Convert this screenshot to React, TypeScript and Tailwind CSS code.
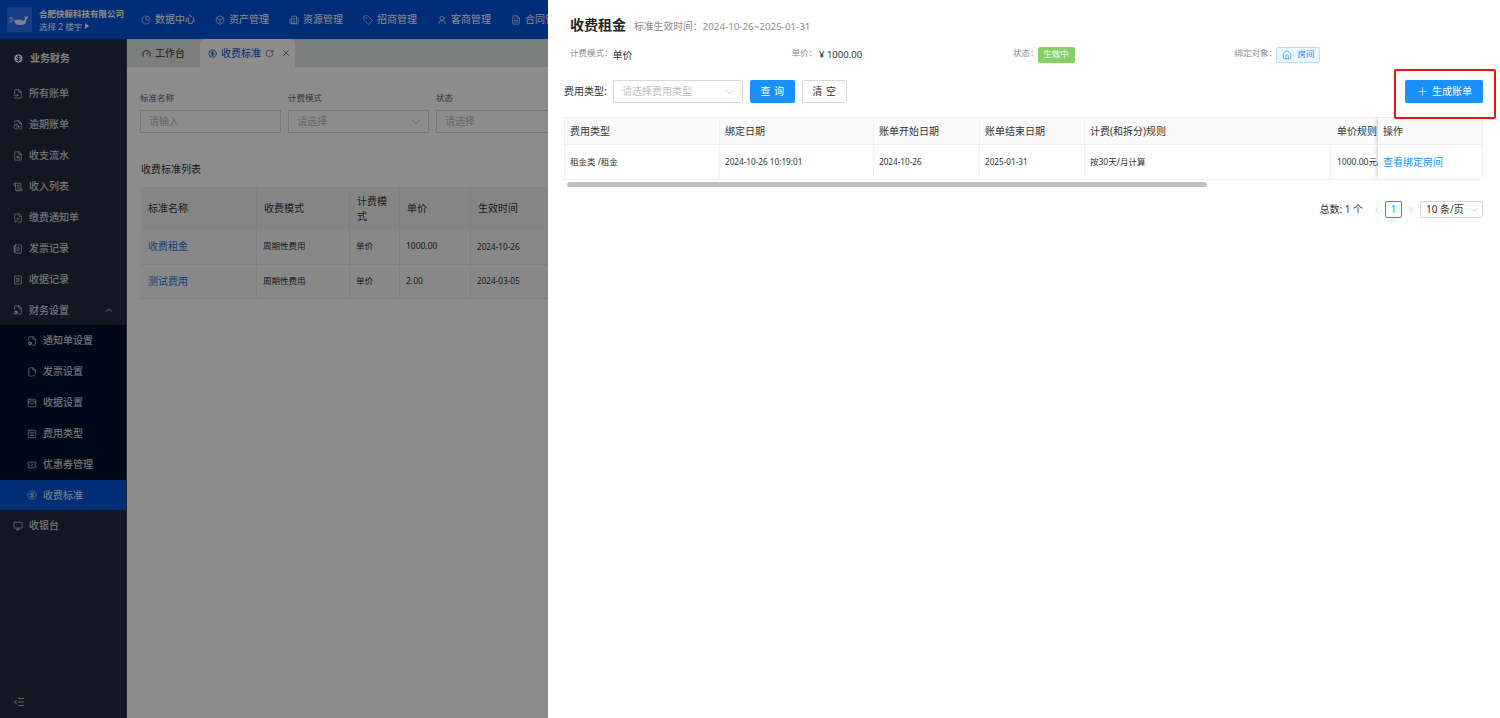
import React from 'react';
import {
  Box, Building2, ChartPie, ChevronDown, ChevronLeft, ChevronRight, ChevronUp, CircleDollarSign, FileClock, FileCog,
  FileSearch, FileText, Gauge, House, IndentDecrease, Monitor, NotebookText, Plus, ReceiptText, RotateCw, ScrollText,
  Tag, TicketPercent, UserRound, WalletCards, X, FileCheck2, FileInput, FilePen, SquareMenu,
} from 'lucide-react';

const FONT = 'font-["Noto_Sans","Noto_Sans_CJK_SC",sans-serif]';

const topNav = [
  { label: '数据中心', icon: ChartPie },
  { label: '资产管理', icon: Box },
  { label: '资源管理', icon: Building2 },
  { label: '招商管理', icon: Tag },
  { label: '客商管理', icon: UserRound },
  { label: '合同管理', icon: FileText },
];

const menu = [
  { label: '所有账单', icon: FileInput },
  { label: '逾期账单', icon: FileClock },
  { label: '收支流水', icon: FileSearch },
  { label: '收入列表', icon: ScrollText },
  { label: '缴费通知单', icon: FilePen },
  { label: '发票记录', icon: NotebookText },
  { label: '收据记录', icon: ReceiptText },
];

const subMenu = [
  { label: '通知单设置', icon: FileCog },
  { label: '发票设置', icon: FileCheck2 },
  { label: '收据设置', icon: WalletCards },
  { label: '费用类型', icon: SquareMenu },
  { label: '优惠券管理', icon: TicketPercent },
];

const listRows = [
  ['收费租金', '周期性费用', '单价', '1000.00', '2024-10-26'],
  ['测试费用', '周期性费用', '单价', '2.00', '2024-03-05'],
];

const Sidebar = () => (
  <aside className="flex w-[127px] shrink-0 flex-col border-r border-[#3a4256] bg-[#242b3f] text-white/90">
    <div className="flex h-[39px] items-center gap-[6px] pl-[13px] text-[10px] font-bold">
      <CircleDollarSign size={11} fill="#fff" stroke="#242b3f" />
      业务财务
    </div>
    {menu.map((m) => (
      <div key={m.label} className="flex h-[31px] items-center gap-[6px] pl-[13px] text-[10px]">
        <m.icon size={10} strokeWidth={1.5} />
        {m.label}
      </div>
    ))}
    <div className="flex h-[30px] items-center gap-[6px] pl-[13px] pr-[12px] text-[10px]">
      <FileCog size={10} strokeWidth={1.5} />
      财务设置
      <ChevronUp size={10} className="ml-auto" />
    </div>
    <div className="bg-[#00122b]">
      {subMenu.map((m) => (
        <div key={m.label} className="flex h-[31px] items-center gap-[6px] pl-[27px] text-[10px]">
          <m.icon size={10} strokeWidth={1.5} />
          {m.label}
        </div>
      ))}
      <div className="flex h-[30px] items-center gap-[6px] bg-[#0054d8] pl-[27px] text-[10px]">
        <CircleDollarSign size={10} strokeWidth={1.5} />
        收费标准
      </div>
    </div>
    <div className="flex h-[31px] items-center gap-[6px] pl-[13px] text-[10px]">
      <Monitor size={10} strokeWidth={1.5} />
      收银台
    </div>
    <div className="mt-auto pb-[10px] pl-[13px]">
      <IndentDecrease size={12} strokeWidth={1.5} />
    </div>
  </aside>
);

const Header = () => (
  <header className="flex h-[39px] shrink-0 items-center bg-[#0052d9] text-white">
    <div className="flex w-[141px] shrink-0 items-center pl-[7px]">
      <div className="flex h-[25px] w-[25px] items-center justify-center rounded-[2px] bg-[#2f72f8]">
        <svg width="21" height="14" viewBox="0 0 21 14">
          <path d="M5 8c3-2 7-1 10 0 1-2 1-4 0-5l2 1 2-1c0 2-1 3-2 4 1 3-2 5-6 5-3 0-5-1-6-4z" fill="#e8f0ff" />
          <path d="M0 5h4M1 7h4M0 9h3" stroke="#e8f0ff" strokeWidth="0.8" />
        </svg>
      </div>
      <div className="ml-[7px] w-[86px] shrink-0 whitespace-nowrap text-[8.5px] leading-[13px]">
        <div className="font-bold">合肥快鲸科技有限公司</div>
        <div className="flex items-center gap-[3px]">
          选择 2 楼宇
          <span className="h-0 w-0 border-y-[3px] border-l-[4px] border-y-transparent border-l-white" />
        </div>
      </div>
    </div>
    <nav className="flex">
      {topNav.map((n) => (
        <div key={n.label} className="flex w-[74px] shrink-0 items-center gap-[4px] whitespace-nowrap text-[10px]">
          <n.icon size={10} strokeWidth={1.5} />
          {n.label}
        </div>
      ))}
    </nav>
  </header>
);

const Background = () => (
  <main className="flex min-w-0 flex-1 flex-col overflow-hidden">
    <div className="flex h-[28px] shrink-0 items-end bg-[#e2e5e3] pl-[15px]">
      <div className="flex h-[28px] w-[58px] items-center gap-[4px] text-[10px] text-[#333]">
        <Gauge size={9} strokeWidth={2.5} />
        工作台
      </div>
      <div className="flex h-[28px] w-[95px] items-center gap-[4px] rounded-t-[5px] bg-white pl-[8px] text-[10px] text-[#0052d9]">
        <CircleDollarSign size={9} />
        收费标准
        <RotateCw size={9} className="text-[#666]" />
        <X size={10} className="ml-[3px] text-[#666]" />
      </div>
    </div>
    <div className="flex-1 bg-white pl-[13px] pt-[25px]">
      <div className="flex gap-[7px] text-[8.5px] text-[#666]">
        {['标准名称', '计费模式', '状态'].map((label, i) => (
          <div key={label} className="w-[141px]">
            <div className="mb-[7px] h-[11px] leading-[11px]">{label}</div>
            <div className="flex h-[23px] items-center justify-between border border-[#d9d9d9] pl-[8px] pr-[5px] text-[10px] text-[#bbb]">
              {i === 0 ? '请输入' : '请选择'}
              {i === 1 && <ChevronDown size={14} strokeWidth={1.25} />}
            </div>
          </div>
        ))}
      </div>
      <div className="ml-[1px] mt-[29px] text-[10px] leading-[14px] text-[#333]">收费标准列表</div>
      <div className="ml-[1px] mt-[11px] w-[600px] text-[#333]">
        <div className="grid h-[43px] grid-cols-[116px_93px_50px_71px_270px] items-center bg-[#f2f2f2] text-[10px] leading-[15px]">
          {['标准名称', '收费模式', '计费模式', '单价', '生效时间'].map((h) => (
            <div key={h} className="flex h-full items-center border-r border-[#e8e8e8] px-[7px]">
              {h}
            </div>
          ))}
        </div>
        {listRows.map((r) => (
          <div key={r[0]} className="grid h-[34.5px] grid-cols-[116px_93px_50px_71px_270px] items-center border-b border-[#e8e8e8] bg-[#f7f7f7] text-[8.5px]">
            {r.map((c, i) => (
              <div key={i} className={`flex h-full items-center border-r border-[#e8e8e8] pl-[6px] pr-[7px] ${i === 0 ? 'pl-[7px] text-[10px] text-[#1e7be0]' : ''} ${i === 4 ? 'text-[8.2px]' : ''}`}>
                {c}
              </div>
            ))}
          </div>
        ))}
      </div>
    </div>
  </main>
);

const MetaLabel = ({ children }: { children: React.ReactNode }) => (
  <span className="mb-[2px] text-[8.5px] text-[#8c8c9c]">{children}</span>
);

const Drawer = () => (
  <section className="absolute inset-y-0 left-[548px] right-0 bg-white text-[#333]">
    <div className="flex items-baseline pl-[22px] pt-[15px]">
      <h1 className="text-[14px] font-bold leading-[20px] text-[#222]">收费租金</h1>
      <span className="ml-[8px] text-[9.8px] text-[#8c8c8c]">标准生效时间：2024-10-26~2025-01-31</span>
    </div>
    <div className="ml-[22px] mt-[11px] grid h-[17px] w-[886px] grid-cols-4 items-center">
      <div className="flex items-center">
        <MetaLabel>计费模式：</MetaLabel>
        <span className="mt-[1px] text-[10px]">单价</span>
      </div>
      <div className="flex items-center gap-[2px]">
        <MetaLabel>单价：</MetaLabel>
        <span className="mt-[1px] text-[9.5px]">¥ 1000.00</span>
      </div>
      <div className="flex items-center">
        <MetaLabel>状态：</MetaLabel>
        <span className="-ml-[1px] flex h-[16px] w-[37px] items-center justify-center rounded-[2px] bg-[#87d068] text-[8.5px] text-white">生效中</span>
      </div>
      <div className="flex items-center">
        <MetaLabel>绑定对象：</MetaLabel>
        <span className="-ml-[1px] flex h-[16px] w-[44px] items-center justify-center gap-[6px] rounded-[2px] border border-[#b7e0fb] bg-[#e8f6ff] text-[8.5px] text-[#1890ff]">
          <House size={10} strokeWidth={1.5} />
          房间
        </span>
      </div>
    </div>
    <div className="ml-[16px] mr-[17px] mt-[17px] flex h-[23px] items-center">
      <span className="w-[49px] whitespace-nowrap text-[10px]">费用类型:</span>
      <div className="flex h-[23px] w-[130px] items-center justify-between rounded-[2px] border border-[#d9d9d9] pl-[8px] pr-[5px] text-[10px] text-[#bfbfbf]">
        请选择费用类型
        <ChevronDown size={14} strokeWidth={1.25} />
      </div>
      <button className="ml-[7px] h-[23px] w-[45px] rounded-[2px] bg-[#1890ff] text-[10px] tracking-[0.5px] text-white">查 询</button>
      <button className="ml-[7px] h-[23px] w-[45px] rounded-[2px] border border-[#d9d9d9] bg-white text-[10px] tracking-[0.5px]">清 空</button>
      <button className="ml-auto flex h-[23px] w-[78px] items-center justify-center gap-[3px] rounded-[2px] bg-[#1890ff] text-[10px] text-white">
        <Plus size={13} strokeWidth={1.25} />
        生成账单
      </button>
    </div>
    <div className="ml-[16px] mr-[17px] mt-[14px]">
      <div className="grid h-[28px] grid-cols-[155px_154px_106px_105px_246px_47px_104px] border border-b-0 border-[#f0f0f0] bg-[#fafafa] text-[10px]">
        {['费用类型', '绑定日期', '账单开始日期', '账单结束日期', '计费(和拆分)规则', '单价规则', '操作'].map((h, i) => (
          <div key={h} className={`flex items-center overflow-hidden whitespace-nowrap border-b border-[#f0f0f0] pl-[5px] ${i < 4 ? 'border-r' : ''} ${i === 5 ? 'pl-[6px]' : ''} ${i === 6 ? 'bg-[#fafafa] shadow-[-3px_0_3px_-1px_rgba(0,0,0,0.15)]' : ''}`}>
            {h}
          </div>
        ))}
      </div>
      <div className="grid h-[35px] grid-cols-[155px_154px_106px_105px_246px_47px_104px] border border-t-0 border-[#f0f0f0] text-[8.5px]">
        {['租金类 /租金', '2024-10-26 10:19:01', '2024-10-26', '2025-01-31', '按30天/月计算', '1000.00元/月', '查看绑定房间'].map((c, i) => (
          <div key={c} className={`flex items-center overflow-hidden whitespace-nowrap pl-[5px] ${i < 5 ? 'border-r border-[#f0f0f0]' : ''} ${i >= 1 && i <= 3 ? 'text-[8.2px]' : ''} ${i === 5 ? 'pl-[6px]' : ''} ${i === 6 ? 'bg-white text-[10px] text-[#1890ff] shadow-[-3px_0_3px_-1px_rgba(0,0,0,0.15)]' : ''}`}>
            {c}
          </div>
        ))}
      </div>
      <div className="ml-[3px] mt-[2px] h-[5px] w-[640px] rounded-full bg-[#c1c1c1]" />
    </div>
    <div className="mr-[17px] mt-[14px] flex h-[17px] items-center justify-end text-[10px]">
      <span className="mr-[9px]">总数: 1 个</span>
      <ChevronLeft size={10} className="text-[#bfbfbf]" />
      <span className="mx-[3px] flex h-[17px] w-[17px] items-center justify-center rounded-[2px] border border-[#1890ff] text-[#1890ff]">1</span>
      <span className="w-[1px]" />
      <ChevronRight size={10} className="text-[#bfbfbf]" />
      <div className="ml-[4px] flex h-[17px] w-[63px] items-center justify-between rounded-[2px] border border-[#d9d9d9] pl-[5px] pr-[2px]">
        10 条/页
        <ChevronDown size={12} strokeWidth={1.25} className="text-[#bfbfbf]" />
      </div>
    </div>
    <div className="absolute left-[846px] top-[69px] h-[50px] w-[102px] rounded-[2px] border-2 border-[#f5100f]" />
  </section>
);

export default function App() {
  return (
    <div className={`relative flex h-[718px] w-[1500px] flex-col overflow-hidden bg-white ${FONT}`}>
      <Header />
      <div className="flex min-h-0 flex-1">
        <Sidebar />
        <Background />
      </div>
      <div className="absolute inset-0 bg-black/45" />
      <Drawer />
    </div>
  );
}
